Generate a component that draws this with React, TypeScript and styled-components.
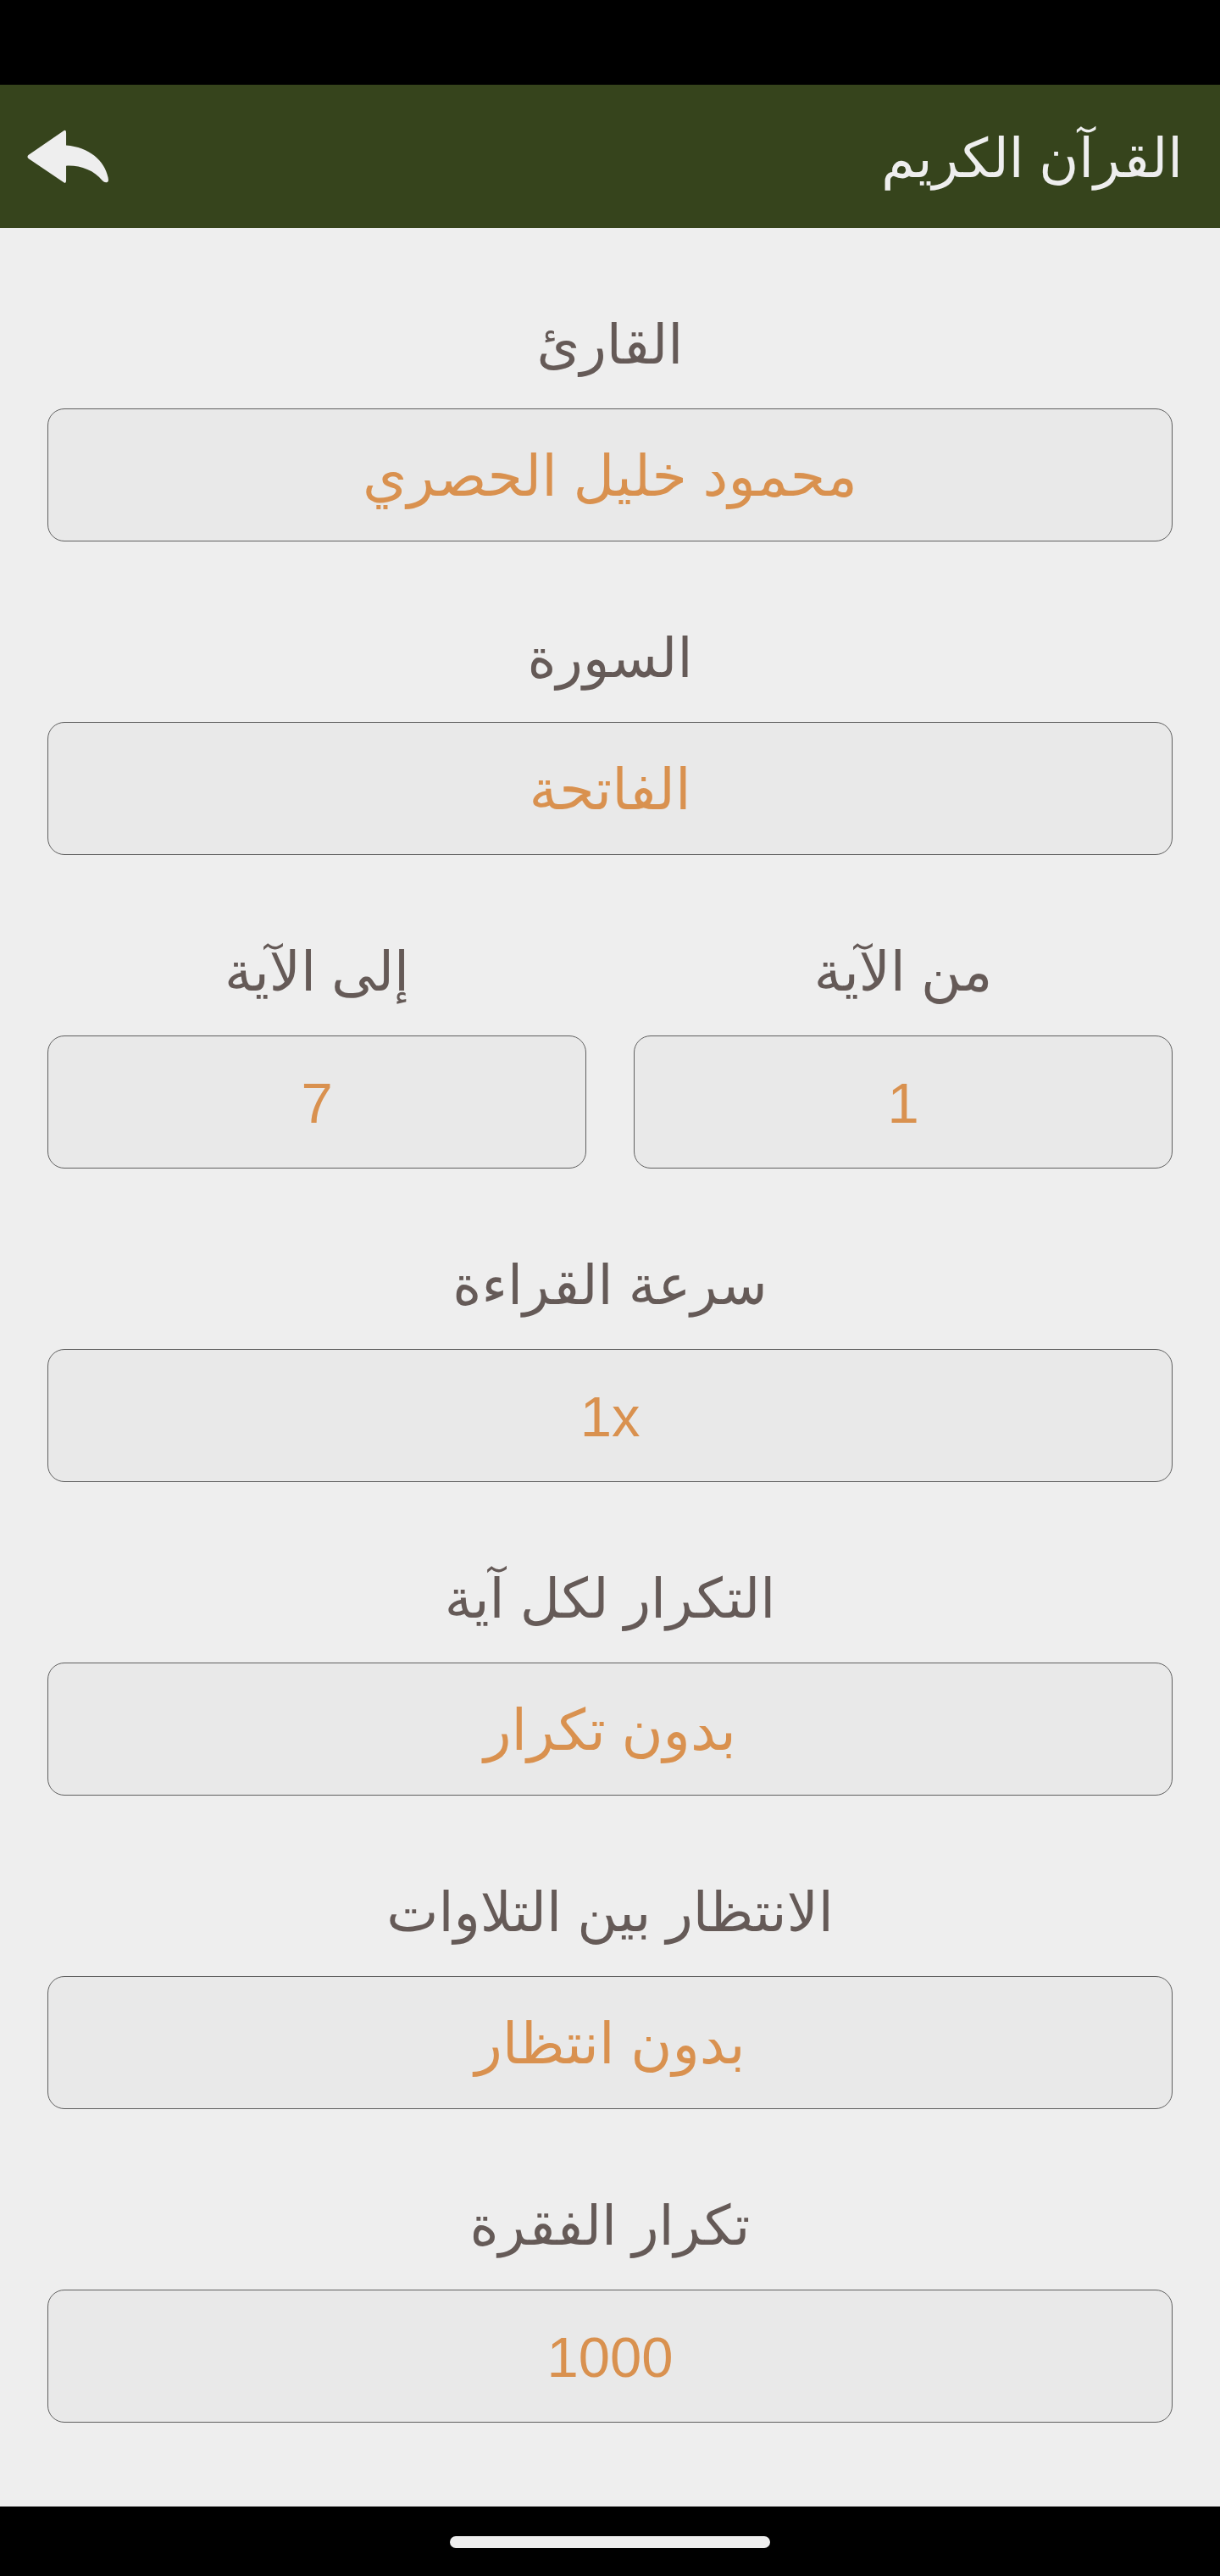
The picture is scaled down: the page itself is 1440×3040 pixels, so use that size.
import styled, { createGlobalStyle } from "styled-components"

const GlobalStyle = createGlobalStyle`
    html, body {
        margin: 0;
        padding: 0;
        background: #000;
    }
    * {
        box-sizing: border-box;
    }
`

const fields = [
    { label: "القارئ", value: "محمود خليل الحصري" },
    { label: "السورة", value: "الفاتحة" },
    { pair: [{ label: "من الآية", value: "1" }, { label: "إلى الآية", value: "7" }] },
    { label: "سرعة القراءة", value: "1x" },
    { label: "التكرار لكل آية", value: "بدون تكرار" },
    { label: "الانتظار بين التلاوات", value: "بدون انتظار" },
    { label: "تكرار الفقرة", value: "1000" },
]

const Field = ({ label, value }: { label: string; value: string }) => (
    <FieldWrap>
        <Label>{label}</Label>
        <ValueBox>{value}</ValueBox>
    </FieldWrap>
)

export default function App() {
    return (
        <Screen dir="rtl">
            <GlobalStyle />
            <StatusBar />
            <Header>
                <Title>القرآن الكريم</Title>
                <BackIcon viewBox="0 0 100 66" aria-label="back">
                    <path
                        d="M45.5 1 L2 31 Q0 33 2 35 L45.5 64.5 Q48 66 48 62 L48 44 C64 43 82 49 92 62 Q95 65 98 64 C100 63 99.5 61 99 58 C95 38 76 21 48 19 L48 4 Q48 0 45.5 1 Z"
                        fill="#eeeeee"
                    />
                </BackIcon>
            </Header>
            <Form>
                {fields.map((f, i) =>
                    f.pair ? (
                        <Pair key={i}>
                            {f.pair.map((p) => (
                                <Field key={p.label} label={p.label} value={p.value} />
                            ))}
                        </Pair>
                    ) : (
                        <Field key={i} label={f.label!} value={f.value!} />
                    )
                )}
            </Form>
            <NavBar>
                <HomePill />
            </NavBar>
        </Screen>
    )
}

const Screen = styled.div`
    width: 1440px;
    height: 3040px;
    display: flex;
    flex-direction: column;
    background: #eeeeee;
    font-family: "Liberation Sans", "DejaVu Sans", sans-serif;
`

const StatusBar = styled.div`
    height: 100px;
    background: #000;
`

const Header = styled.header`
    height: 169px;
    padding: 0 44px 0 31px;
    display: flex;
    align-items: center;
    justify-content: space-between;
    background: #36441c;
`

const Title = styled.h1`
    margin: 4px 0 0;
    font-size: 64px;
    font-weight: 400;
    line-height: 1;
    color: #eeeeee;
`

const BackIcon = styled.svg`
    width: 98px;
    height: 64px;
`

const Form = styled.main`
    flex: 1;
    padding: 0 56px;
    display: flex;
    flex-direction: column;
`

const Pair = styled.div`
    display: grid;
    grid-template-columns: 1fr 1fr;
    gap: 56px;
`

const FieldWrap = styled.div`
    min-width: 0;
    display: flex;
    flex-direction: column;
`

const Label = styled.div`
    height: 213px;
    padding-bottom: 36px;
    display: flex;
    align-items: flex-end;
    justify-content: center;
    font-size: 65px;
    line-height: 1.2;
    color: #655a57;
`

const ValueBox = styled.div`
    height: 157px;
    padding-top: 2px;
    display: flex;
    align-items: center;
    justify-content: center;
    background: #e9e9e9;
    border: 1px solid #5f5f5f;
    border-radius: 20px;
    font-size: 67px;
    line-height: 1;
    color: #d9914f;
`

const NavBar = styled.div`
    height: 82px;
    padding-top: 35px;
    display: flex;
    justify-content: center;
    background: #000;
`

const HomePill = styled.div`
    width: 378px;
    height: 14px;
    border-radius: 7px;
    background: #eeeeee;
`
